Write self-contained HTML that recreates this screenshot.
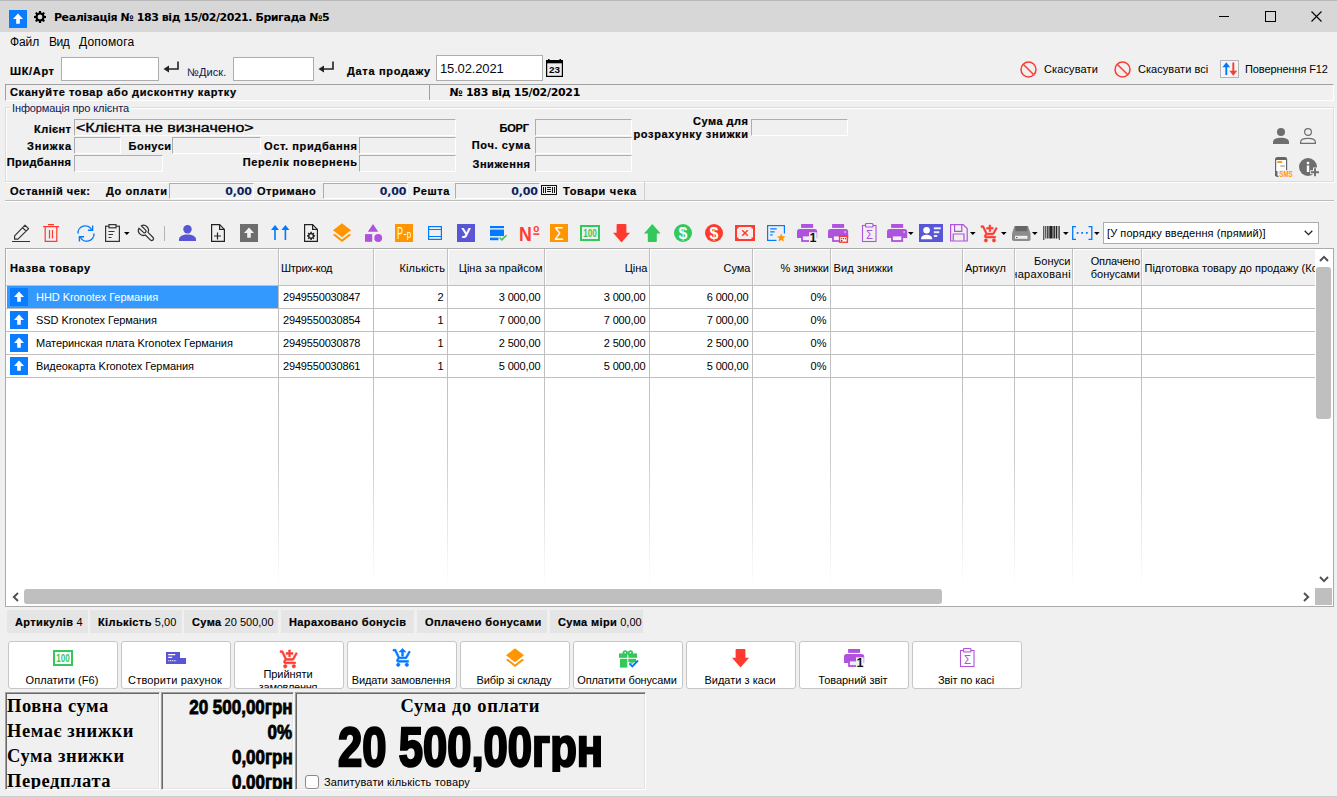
<!DOCTYPE html>
<html lang="uk"><head><meta charset="utf-8"><title>Реалізація</title>
<style>
*{box-sizing:border-box;margin:0;padding:0}
html,body{width:1337px;height:797px;overflow:hidden;background:#f0f0f0}
body{position:relative;font-family:"Liberation Sans",sans-serif;font-size:11px;color:#000}
.a{position:absolute;white-space:nowrap}
.t{position:absolute;white-space:nowrap;line-height:14px;height:14px}
.b{font-weight:bold}
.msb{font-weight:bold;font-size:11px;letter-spacing:.58px;-webkit-text-stroke:.2px #000}
.r{text-align:right}
.c{text-align:center}
.inp{position:absolute;background:#fff;border:1px solid #adadad}
.fld{position:absolute;background:#f0f0f0;border:1px solid;border-color:#adadad #fff #fff #adadad}
.sunk{position:absolute;border:1px solid;border-color:#a0a0a0 #fff #fff #a0a0a0}
.vl{position:absolute;width:1px;background:#c0c0c0}
.hl{position:absolute;height:1px;background:#c0c0c0}
.chip{position:absolute;top:610px;height:23px;background:#e5e5e5;line-height:24px;padding-left:8px;white-space:nowrap;font-size:11px}
.chip b{letter-spacing:.38px;-webkit-text-stroke:.2px #000}
.btn{position:absolute;top:641px;width:110px;height:48px;background:#fff;border:1px solid #c6c6c6;border-radius:3px;overflow:hidden}
.btn .lb{position:absolute;left:-2px;right:0;text-align:center;top:31px;line-height:14px;font-size:11px;white-space:nowrap}
.ic{position:absolute;overflow:visible}
.serif{font-family:"Liberation Serif",serif;font-weight:bold;font-size:18.500px;line-height:24px;height:24px}
.imp{font-family:"Liberation Sans",sans-serif;font-weight:bold;transform-origin:100% 50%;}
</style></head>
<body>
<div class="a" style="left:0;top:0;width:1337px;height:32px;background:#d7d7d7;border-top:1px solid #b9b9b9"></div>
<svg class="ic" style="left:9px;top:10px" width="18" height="18" viewBox="0 0 18 18"><rect width="18" height="18" fill="#0a7cff"/><path d="M9 3.6 L14 9 H10.8 V13.8 H7.2 V9 H4 Z" fill="#fff"/></svg>
<svg class="ic" style="left:34px;top:11px" width="12" height="12" viewBox="0 0 24 24"><path fill="#000" fill-rule="evenodd" d="M10 0h4l.6 3.4 1.9.8L19.3 2.2l2.5 2.5-2 2.8.8 1.9L24 10v4l-3.4.6-.8 1.9 2 2.8-2.5 2.5-2.8-2-1.9.8L14 24h-4l-.6-3.4-1.9-.8-2.8 2-2.5-2.5 2-2.8-.8-1.9L0 14v-4l3.4-.6.8-1.9-2-2.8 2.5-2.5 2.8 2 1.9-.8zM12 7.2a4.8 4.8 0 100 9.600 4.800 4.800 0 000-9.600z"/></svg>
<div class="t " style="left:54px;top:11px;font-family:'DejaVu Sans',sans-serif;font-weight:bold;font-size:11px;letter-spacing:-.44px">Реалізація № 183 від 15/02/2021. Бригада №5</div>
<svg class="ic" style="left:1210px;top:1px" width="127" height="30" viewBox="0 0 127 30"><g stroke="#000" stroke-width="1" fill="none" shape-rendering="crispEdges"><path d="M9 15.500 H19"/><rect x="55.500" y="10.500" width="10" height="10"/></g><path d="M101.500 10.500 L111.500 20.500 M111.500 10.500 L101.500 20.500" stroke="#000" stroke-width="1.100" fill="none"/></svg>
<div class="t " style="left:10px;top:35px;font-size:12px;letter-spacing:-.12px">Файл</div>
<div class="t " style="left:49px;top:35px;font-size:12px;letter-spacing:-.5px">Вид</div>
<div class="t " style="left:79px;top:35px;font-size:12px;letter-spacing:.2px">Допомога</div>
<div class="t msb" style="left:10px;top:64px;letter-spacing:0.654px;">ШК/Арт</div>
<div class="inp" style="left:61px;top:57px;width:98px;height:24px"></div>
<svg class="ic" style="left:163px;top:61px" width="17" height="13" viewBox="0 0 17 13"><path d="M15 0.500 V8 H5" stroke="#222" stroke-width="1.600" fill="none"/><path d="M0.500 8 L6 4.500 V11.500 Z" fill="#222"/></svg>
<div class="t " style="left:187px;top:65px;color:#0c1650;letter-spacing:.1px">№Диск.</div>
<div class="inp" style="left:233px;top:57px;width:81px;height:24px"></div>
<svg class="ic" style="left:318px;top:61px" width="17" height="13" viewBox="0 0 17 13"><path d="M15 0.500 V8 H5" stroke="#222" stroke-width="1.600" fill="none"/><path d="M0.500 8 L6 4.500 V11.500 Z" fill="#222"/></svg>
<div class="t msb" style="left:347px;top:64px;letter-spacing:0.685px;">Дата продажу</div>
<div class="inp" style="left:436px;top:55px;width:107px;height:26px"></div>
<div class="t " style="left:440px;top:62px;font-size:13px;letter-spacing:-.15px;color:#0a0a14;line-height:16px;height:16px;top:61px">15.02.2021</div>
<svg class="ic" style="left:546px;top:59px" width="17" height="18" viewBox="0 0 17 18"><rect x=".600" y="1.600" width="15.800" height="15.800" fill="#ececec" stroke="#000" stroke-width="1.200"/><rect x="0" y="1" width="17" height="3.300" fill="#000"/><rect x="2" y="0" width="1.500" height="2" fill="#000"/><rect x="13.500" y="0" width="1.500" height="2" fill="#000"/><text x="8.500" y="14.200" font-family="Liberation Sans,sans-serif" font-weight="bold" font-size="9.500" text-anchor="middle" fill="#000" textLength="11" lengthAdjust="spacingAndGlyphs">23</text></svg>
<svg class="ic" style="left:1020px;top:61px" width="17" height="17" viewBox="0 0 17 17"><circle cx="8.500" cy="8.500" r="7.500" fill="none" stroke="#ff3b30" stroke-width="1.500"/><path d="M3.200 3.200 L13.800 13.800" stroke="#ff3b30" stroke-width="1.500"/></svg>
<div class="t " style="left:1044px;top:62px;letter-spacing:.12px">Скасувати</div>
<svg class="ic" style="left:1114px;top:61px" width="17" height="17" viewBox="0 0 17 17"><circle cx="8.500" cy="8.500" r="7.500" fill="none" stroke="#ff3b30" stroke-width="1.500"/><path d="M3.200 3.200 L13.800 13.800" stroke="#ff3b30" stroke-width="1.500"/></svg>
<div class="t " style="left:1138px;top:62px;letter-spacing:.05px">Скасувати всі</div>
<svg class="ic" style="left:1220px;top:60px" width="19" height="18" viewBox="0 0 19 18"><rect x="0.500" y="0.500" width="18" height="17" fill="#f5f5f5" stroke="#b5b5b5"/><path d="M6.300 15 V6" stroke="#007aff" stroke-width="1.900"/><path d="M2.400 7.300 L6.300 2.300 L10.200 7.300 Z" fill="#007aff"/><path d="M13.300 2.500 V12" stroke="#ff3b30" stroke-width="1.900"/><path d="M9.400 10.700 L13.300 15.700 L17.200 10.700 Z" fill="#ff3b30"/></svg>
<div class="t " style="left:1245px;top:62px;letter-spacing:-.1px">Повернення F12</div>
<div class="sunk" style="left:5px;top:84px;width:1329px;height:17px"></div>
<div class="a" style="left:429px;top:85px;width:1px;height:15px;background:#a0a0a0"></div>
<div class="t msb" style="left:10px;top:85px;letter-spacing:0.594px;">Скануйте товар або дисконтну картку</div>
<div class="t " style="left:449.5px;top:86px;font-family:'DejaVu Sans',sans-serif;font-weight:bold;font-size:11px;letter-spacing:-.3px">№ 183 від 15/02/2021</div>
<div class="a" style="left:5px;top:107px;width:1329px;height:75px;border:1px solid #dcdcdc;box-shadow:inset 1px 1px 0 #fff, 1px 1px 0 #fff"></div>
<div class="t" style="left:10px;top:101px;background:#f0f0f0;padding:0 2px;color:#0c1650;letter-spacing:-.12px">Інформація про клієнта</div>
<div class="t msb" style="right:1265.593px;top:122px;letter-spacing:0.407px;">Клієнт</div>
<div class="fld" style="left:74px;top:119px;width:382px;height:17px"></div>
<div class="t" style="left:76px;top:120px;font-size:12.500px;line-height:16px;height:16px;transform-origin:0 50%;transform:scaleX(1.28);-webkit-text-stroke:.35px #000">&lt;Клієнта не визначено&gt;</div>
<div class="t msb" style="right:1265.124px;top:139px;letter-spacing:0.876px;">Знижка</div>
<div class="fld" style="left:74px;top:137px;width:47px;height:17px"></div>
<div class="t msb" style="right:1165.499px;top:139px;letter-spacing:0.501px;">Бонуси</div>
<div class="fld" style="left:172px;top:137px;width:89px;height:17px"></div>
<div class="t msb" style="right:979.379px;top:139px;letter-spacing:0.621px;">Ост. придбання</div>
<div class="fld" style="left:359px;top:137px;width:97px;height:17px"></div>
<div class="t msb" style="right:1265.599px;top:155px;letter-spacing:0.401px;">Придбання</div>
<div class="fld" style="left:74px;top:155px;width:89px;height:17px"></div>
<div class="t msb" style="right:979.384px;top:155px;letter-spacing:0.616px;">Перелік повернень</div>
<div class="fld" style="left:359px;top:155px;width:97px;height:17px"></div>
<div class="t msb" style="right:808.178px;top:121px;letter-spacing:-0.178px;">БОРГ</div>
<div class="fld" style="left:535px;top:119px;width:97px;height:17px"></div>
<div class="t msb" style="right:806.35px;top:138px;letter-spacing:0.65px;">Поч. сума</div>
<div class="fld" style="left:535px;top:137px;width:97px;height:17px"></div>
<div class="t msb" style="right:806.468px;top:157px;letter-spacing:0.532px;">Зниження</div>
<div class="fld" style="left:535px;top:155px;width:97px;height:17px"></div>
<div class="t msb" style="right:588.496px;top:114px;letter-spacing:0.504px;">Сума для</div>
<div class="t msb" style="right:588.358px;top:127px;letter-spacing:0.642px;">розрахунку знижки</div>
<div class="fld" style="left:751px;top:119px;width:97px;height:17px"></div>
<div class="t msb" style="left:10px;top:184px;letter-spacing:0.499px;">Останній чек:</div>
<div class="t msb" style="left:106px;top:184px;letter-spacing:0.579px;">До оплати</div>
<div class="fld" style="left:169px;top:183px;width:85px;height:16px"></div>
<div class="t " style="right:1085.147px;top:185px;letter-spacing:-0.147px;color:#0b1f5e;font-family:'DejaVu Sans',sans-serif;font-weight:bold;font-size:11px">0,00</div>
<div class="t msb" style="left:257px;top:184px;letter-spacing:0.55px;">Отримано</div>
<div class="fld" style="left:323px;top:183px;width:85px;height:16px"></div>
<div class="t " style="right:930.647px;top:185px;letter-spacing:-0.147px;color:#0b1f5e;font-family:'DejaVu Sans',sans-serif;font-weight:bold;font-size:11px">0,00</div>
<div class="t msb" style="left:413px;top:184px;letter-spacing:0.599px;">Решта</div>
<div class="fld" style="left:455px;top:183px;width:85px;height:16px"></div>
<div class="t " style="right:799.147px;top:185px;letter-spacing:-0.147px;color:#0b1f5e;font-family:'DejaVu Sans',sans-serif;font-weight:bold;font-size:11px">0,00</div>
<div class="t msb" style="left:563px;top:184px;letter-spacing:0.685px;">Товари чека</div>
<div class="a" style="left:644px;top:182px;width:1px;height:18px;background:#d0d0d0"></div>
<svg class="ic" style="left:12px;top:224px" width="18" height="18" viewBox="0 0 18 18"><path d="M2.600 15.200V11.800L13 1.200l3.600 3.400L6 15.200Z M10.600 3.700l3.600 3.400" stroke="#333" stroke-width="1.200" fill="none" stroke-linejoin="round"/><path d="M0 17.500H18" stroke="#333" stroke-width="1"/></svg>
<svg class="ic" style="left:43px;top:224px" width="16" height="18" viewBox="0 0 16 18"><g stroke="#ff3b30" stroke-width="1.200" fill="none"><path d="M5 .600h6M0 2.600h16M2.200 3V17.400H13.800V3M6.500 6v8.500M9.500 6v8.500"/></g></svg>
<svg class="ic" style="left:77px;top:225px" width="18" height="17" viewBox="0 0 18 17"><g stroke="#007aff" stroke-width="1.400" fill="none"><path d="M1 8.500A7.200 7.200 0 0 1 14.600 4.800"/><path d="M15.600 .500V5.200H10.900"/><path d="M17 8.500A7.200 7.200 0 0 1 3.400 12.200"/><path d="M2.400 16.500V11.800H7.100"/></g></svg>
<svg class="ic" style="left:105px;top:224px" width="15" height="18" viewBox="0 0 15 18"><g stroke="#333" stroke-width="1.200" fill="none"><rect x=".600" y="2.200" width="13.800" height="15.200"/><rect x="4" y=".600" width="7" height="3.200" fill="#f0f0f0"/><path d="M3.500 7.500h6M3.500 10.500h4.500M3.500 13.500h3"/></g></svg>
<svg class="ic" style="left:124px;top:232px" width="6" height="3" viewBox="0 0 6 3"><path d="M0 0H5.600L2.800 3Z" fill="#000"/></svg>
<svg class="ic" style="left:138px;top:225px" width="17" height="17" viewBox="0 0 17 17"><path d="M3.300 .8A5 5 0 0 1 10 7.400L15.100 12.500A1.850 1.850 0 0 1 12.500 15.100L7.400 10A5 5 0 0 1 .9 3.200L5.500 7.400A1.600 1.600 0 0 0 7.700 5.100Z" stroke="#333" stroke-width="1.250" fill="none" stroke-linejoin="round"/></svg>
<svg class="ic" style="left:178.5px;top:225px" width="17" height="16" viewBox="0 0 17 16"><circle cx="8.500" cy="4.200" r="4.200" fill="#5856d6"/><path d="M0 16V14.600C0 11.200 4 9.600 8.500 9.600S17 11.200 17 14.600V16Z" fill="#5856d6"/></svg>
<svg class="ic" style="left:211px;top:224px" width="14" height="18" viewBox="0 0 14 18"><g stroke="#222" stroke-width="1.200" fill="none"><path d="M.600 .600H8.600L13.400 5.400V17.400H.600Z"/><path d="M8.600 .600V5.400H13.400"/><path d="M6.500 8.500v7M3 12h7"/></g></svg>
<svg class="ic" style="left:240px;top:224px" width="18" height="18" viewBox="0 0 18 18"><rect width="18" height="18" fill="#6e6e6e"/><path d="M9 3.600 L14 9 H10.800 V13.800 H7.200 V9 H4 Z" fill="#f2f2f2"/></svg>
<svg class="ic" style="left:271px;top:225px" width="19" height="15" viewBox="0 0 19 15"><g fill="#007aff"><path d="M0 5L4 0L8 5Z"/><rect x="3.200" y="4" width="1.600" height="11"/><path d="M10.400 5L14.400 0L18.400 5Z"/><rect x="13.600" y="4" width="1.600" height="11"/></g></svg>
<svg class="ic" style="left:304px;top:224px" width="14" height="18" viewBox="0 0 14 18"><g stroke="#222" stroke-width="1.200" fill="none"><path d="M.600 .600H8.600L13.400 5.400V17.400H.600Z"/><path d="M8.600 .600V5.400H13.400"/></g><path transform="translate(3 7.800) scale(.34)" fill="#222" fill-rule="evenodd" d="M10 0h4l.6 3.400 1.900.8L19.300 2.200l2.500 2.500-2 2.800.8 1.900L24 10v4l-3.400.600-.8 1.900 2 2.800-2.500 2.500-2.800-2-1.900.8L14 24h-4l-.600-3.400-1.900-.8-2.800 2-2.500-2.500 2-2.800-.8-1.900L0 14v-4l3.400-.600.8-1.900-2-2.800 2.500-2.500 2.800 2 1.900-.8zM12 7.200a4.800 4.800 0 100 9.600 4.800 4.800 0 000-9.600z"/></svg>
<svg class="ic" style="left:333px;top:223px" width="18" height="19" viewBox="0 0 18 19"><path d="M9 .200L18 7.200L9 14.200L0 7.200Z" fill="#ff9500"/><path d="M1.700 10.700L9 16.400L16.300 10.700L18 12L9 19L0 12Z" fill="#ff9500"/></svg>
<svg class="ic" style="left:365px;top:224px" width="18" height="18" viewBox="0 0 18 18"><g fill="#af52de"><path d="M8 0L13.200 7.700H2.800Z"/><rect x="0" y="10.100" width="7.200" height="7.700"/><circle cx="13.200" cy="14" r="3.900"/></g></svg>
<svg class="ic" style="left:395px;top:224px" width="18" height="18" viewBox="0 0 18 18"><rect width="18" height="18" fill="#ff9500"/><text x="2" y="14.5" font-family="Liberation Sans,sans-serif" font-weight="normal" font-size="17" text-anchor="start" fill="#fff" textLength="6" lengthAdjust="spacingAndGlyphs">P</text><text x="8.2" y="13" font-family="Liberation Sans,sans-serif" font-weight="normal" font-size="11" text-anchor="start" fill="#fff" >-</text><text x="11.8" y="14" font-family="Liberation Sans,sans-serif" font-weight="normal" font-size="10" text-anchor="start" fill="#fff" textLength="4.500" lengthAdjust="spacingAndGlyphs">p</text></svg>
<svg class="ic" style="left:428px;top:226px" width="14" height="14" viewBox="0 0 14 14"><g stroke="#007aff" stroke-width="1.200" fill="none"><rect x=".600" y=".600" width="12.800" height="12.800"/><path d="M.600 3.500H13.400M.600 10.500H13.400"/></g></svg>
<svg class="ic" style="left:457px;top:224px" width="18" height="18" viewBox="0 0 18 18"><rect width="18" height="18" fill="#5856d6"/><text x="9" y="14.3" font-family="Liberation Sans,sans-serif" font-weight="bold" font-size="15" text-anchor="middle" fill="#fff" >У</text></svg>
<svg class="ic" style="left:490px;top:226px" width="17" height="15" viewBox="0 0 17 15"><g fill="#007aff"><rect x="0" y="0" width="14" height="2.200"/><rect x="0" y="3.600" width="14" height="6.500"/><rect x="0" y="11.600" width="8.500" height="2.600"/></g><path d="M9.700 11.600l2.200 2.200l4.500-4.600" stroke="#34c759" stroke-width="1.600" fill="none"/></svg>
<svg class="ic" style="left:518.8px;top:225px" width="21" height="16" viewBox="0 0 21 16"><text x="0" y="16" font-family="Liberation Sans,sans-serif" font-weight="bold" font-size="21" text-anchor="start" fill="#ff3b30" textLength="12.800" lengthAdjust="spacingAndGlyphs">N</text><text x="17.3" y="7.3" font-family="Liberation Sans,sans-serif" font-weight="bold" font-size="10" text-anchor="middle" fill="#ff3b30" >o</text><rect x="14.300" y="8.300" width="6" height="1.600" fill="#ff3b30"/></svg>
<svg class="ic" style="left:550px;top:224px" width="18" height="18" viewBox="0 0 18 18"><rect width="18" height="18" fill="#ff9500"/><text x="9" y="15.6" font-family="Liberation Sans,sans-serif" font-weight="normal" font-size="18.5" text-anchor="middle" fill="#fff" textLength="9.500" lengthAdjust="spacingAndGlyphs">Σ</text></svg>
<svg class="ic" style="left:580px;top:225px" width="20" height="16" viewBox="0 0 20 16"><rect x="1" y="1" width="18" height="14" fill="none" stroke="#34c759" stroke-width="2"/><text x="10" y="12" font-family="Liberation Sans,sans-serif" font-weight="bold" font-size="11" text-anchor="middle" fill="#34c759" textLength="13.500" lengthAdjust="spacingAndGlyphs">100</text></svg>
<svg class="ic" style="left:612.7px;top:224px" width="17" height="19" viewBox="0 0 17 19"><path d="M3.600 .9Q3.600 0 4.500 0H12.500Q13.400 0 13.400 .9V8.700H17L8.500 18.400L0 8.700H3.600Z" fill="#ff3b30"/></svg>
<svg class="ic" style="left:643.6px;top:224px" width="17" height="18" viewBox="0 0 17 18"><path d="M8.300 0L16.600 9.400H12.800V17Q12.800 17.900 11.900 17.900H4.700Q3.800 17.900 3.800 17V9.400H0Z" fill="#34c759"/></svg>
<svg class="ic" style="left:674px;top:224px" width="18" height="18" viewBox="0 0 18 18"><circle cx="9" cy="9" r="9" fill="#34c759"/><text x="9" y="14.6" font-family="Liberation Sans,sans-serif" font-weight="bold" font-size="16" text-anchor="middle" fill="#fff" >$</text></svg>
<svg class="ic" style="left:705px;top:224px" width="18" height="18" viewBox="0 0 18 18"><circle cx="9" cy="9" r="9" fill="#ff3b30"/><text x="9" y="14.6" font-family="Liberation Sans,sans-serif" font-weight="bold" font-size="16" text-anchor="middle" fill="#fff" >$</text></svg>
<svg class="ic" style="left:735px;top:225px" width="20" height="16" viewBox="0 0 20 16"><rect width="20" height="16" fill="#ff3b30"/><path d="M3.500 2H16.500V3.500H18V12.500H16.500V14H3.500V12.500H2V3.500H3.500Z" fill="#f6eeee"/><path d="M7.200 5.200l5.600 5.600M12.800 5.200l-5.600 5.600" stroke="#ff3b30" stroke-width="1.500"/></svg>
<svg class="ic" style="left:767px;top:225px" width="18" height="16" viewBox="0 0 18 16"><rect x=".600" y=".600" width="16.800" height="14.800" fill="none" stroke="#007aff" stroke-width="1.200"/><path d="M3.200 3.800h6.500M3.200 6.800h4.500M3.200 9.800h2.500" stroke="#007aff" stroke-width="1.200"/><rect x="9.500" y="8.500" width="9" height="8" fill="#f0f0f0"/><path d="M14.200 8.600l1.250 2.700 2.950.3-2.200 2 .65 2.900-2.650-1.500-2.650 1.500.65-2.900-2.200-2 2.950-.3z" fill="#ff9500"/></svg>
<svg class="ic" style="left:797px;top:224px" width="21" height="19" viewBox="0 0 21 19"><rect x="4.100" y="0" width="12" height="3.900" fill="#af52de"/><path d="M0 13.900V7.700Q0 5.100 2.600 5.100H17.600Q20.200 5.100 20.200 7.700V13.900Z" fill="#af52de"/><rect x="4.100" y="10.600" width="12" height="7.300" fill="#af52de"/><rect x="5.900" y="12.400" width="8.400" height="3.700" fill="#f0f0f0"/><rect x="12" y="8.300" width="7.700" height="10.500" fill="#f0f0f0"/><text x="16" y="17.9" font-family="Liberation Sans,sans-serif" font-weight="bold" font-size="12.5" text-anchor="middle" fill="#111" >1</text></svg>
<svg class="ic" style="left:828px;top:224px" width="21" height="19" viewBox="0 0 21 19"><rect x="4.100" y="0" width="12" height="3.900" fill="#af52de"/><path d="M0 13.900V7.700Q0 5.100 2.600 5.100H17.600Q20.200 5.100 20.200 7.700V13.900Z" fill="#af52de"/><rect x="4.100" y="10.600" width="12" height="7.300" fill="#af52de"/><rect x="5.900" y="12.400" width="8.400" height="3.700" fill="#f0f0f0"/><circle cx="17.100" cy="7.900" r="1" fill="#dcb4f2"/><rect x="11.600" y="11.900" width="7.800" height="6.300" fill="#fff" stroke="#ff3b30" stroke-width="1.400"/><rect x="10.900" y="11.200" width="9.200" height="1.900" fill="#ff3b30"/><path d="M13.200 14.800h1.100m.8 0h1.100m.8 0h1.100M13.200 16.600h1.100" stroke="#222" stroke-width="1.100"/></svg>
<svg class="ic" style="left:862px;top:223px" width="15" height="19" viewBox="0 0 15 19"><rect x=".500" y="2.500" width="13.500" height="16" fill="none" stroke="#af52de" stroke-width="1.100"/><rect x="3.500" y=".500" width="7.500" height="3.500" rx="1" fill="#f0f0f0" stroke="#af52de" stroke-width="1.200"/><text x="7.4" y="15.7" font-family="Liberation Sans,sans-serif" font-weight="normal" font-size="13.5" text-anchor="middle" fill="#af52de" textLength="7" lengthAdjust="spacingAndGlyphs">Σ</text></svg>
<svg class="ic" style="left:887px;top:224px" width="20" height="18" viewBox="0 0 20 18"><rect x="4.100" y="0" width="12" height="3.900" fill="#af52de"/><path d="M0 13.900V7.700Q0 5.100 2.600 5.100H17.600Q20.200 5.100 20.200 7.700V13.900Z" fill="#af52de"/><rect x="4.100" y="10.600" width="12" height="7.300" fill="#af52de"/><rect x="5.900" y="12.400" width="8.400" height="3.700" fill="#f0f0f0"/><circle cx="17.100" cy="7.900" r="1" fill="#dcb4f2"/></svg>
<svg class="ic" style="left:908px;top:232px" width="6" height="3" viewBox="0 0 6 3"><path d="M0 0H5.600L2.800 3Z" fill="#000"/></svg>
<svg class="ic" style="left:919px;top:224px" width="24" height="18" viewBox="0 0 24 18"><rect width="24" height="18" fill="#5856d6"/><circle cx="7.600" cy="6.300" r="3.300" fill="#fff"/><path d="M2 15.200C2 11.700 5 10.700 7.600 10.700S13.200 11.700 13.200 15.200Z" fill="#fff"/><g fill="#ebebfa"><rect x="14.800" y="3.300" width="7" height="2"/><rect x="14.800" y="7.200" width="5.500" height="2"/><rect x="14.800" y="11" width="3.500" height="2"/></g></svg>
<svg class="ic" style="left:950px;top:224px" width="18" height="18" viewBox="0 0 18 18"><g stroke="#af52de" stroke-width="1.200" fill="none"><path d="M.600 .600H13.200L17.200 4.600V17H.600Z"/><path d="M4.600 .600V7.400H11.800V.600"/><path d="M3.200 17V10H14V17"/></g></svg>
<svg class="ic" style="left:970px;top:232px" width="6" height="3" viewBox="0 0 6 3"><path d="M0 0H5.600L2.800 3Z" fill="#000"/></svg>
<svg class="ic" style="left:981.3px;top:225px" width="17" height="17" viewBox="0 0 17 17"><g transform="translate(-.8 -.8) scale(.81)" fill="#ff3b30" stroke="#ff3b30" stroke-width=".7"><path d="M11 9h2V6h3V4h-3V1h-2v3H8v2h3v3z"/><path d="M7 18c-1.100 0-1.990.9-1.990 2S5.900 22 7 22s2-.9 2-2-.9-2-2-2zm10 0c-1.100 0-1.990.9-1.990 2s.890 2 1.990 2 2-.9 2-2-.9-2-2-2zm-9.830-3.250l.030-.120.9-1.630h7.450c.750 0 1.410-.410 1.750-1.030l3.860-7.010L19.420 4h-.010l-1.100 2-2.760 5H8.530l-.130-.270L6.160 6l-.950-2-.940-2H1v2h2l3.600 7.590-1.350 2.450c-.160.280-.250.610-.250.960 0 1.100.9 2 2 2h12v-2H7.420c-.130 0-.250-.110-.250-.250z"/></g></svg>
<svg class="ic" style="left:1001px;top:232px" width="6" height="3" viewBox="0 0 6 3"><path d="M0 0H5.600L2.800 3Z" fill="#000"/></svg>
<svg class="ic" style="left:1011.8px;top:226px" width="19" height="15" viewBox="0 0 19 15"><path d="M2.500 0H16L18.500 7.500V13.200Q18.500 15 16.700 15H1.800Q0 15 0 13.200V7.500Z" fill="#8c8c8c"/><rect x="3.300" y="0" width="11.900" height="5.200" fill="#666"/><rect x="3" y="9.800" width="12.500" height="3" fill="#eee"/><rect x="4.200" y="11" width="1.200" height="1" fill="#444"/></svg>
<svg class="ic" style="left:1032px;top:232px" width="6" height="3" viewBox="0 0 6 3"><path d="M0 0H5.600L2.800 3Z" fill="#000"/></svg>
<svg class="ic" style="left:1043px;top:226px" width="17" height="14" viewBox="0 0 17 14"><g fill="#222"><rect x=".3" y="0" width="1" height="14"/><rect x="2.300" y="0" width="1" height="12.500"/><rect x="4.200" y="0" width="1.300" height="12.500"/><rect x="6.300" y="0" width="3.300" height="12.500"/><rect x="10.400" y="0" width="1.500" height="12.500"/><rect x="12.700" y="0" width="1.400" height="12.500"/><rect x="14.800" y="0" width=".7" height="12.500"/><rect x="15.900" y="0" width=".8" height="14"/></g></svg>
<svg class="ic" style="left:1063px;top:232px" width="6" height="3" viewBox="0 0 6 3"><path d="M0 0H5.600L2.800 3Z" fill="#000"/></svg>
<svg class="ic" style="left:1072px;top:226px" width="21" height="14" viewBox="0 0 21 14"><g stroke="#007aff" stroke-width="1.300" fill="none"><path d="M4 .600H.700V13.400H4M16.500 .600H19.800V13.400H16.500"/></g><g fill="#007aff"><rect x="4.700" y="6" width="1.800" height="1.800"/><rect x="9.300" y="6" width="1.800" height="1.800"/><rect x="13.900" y="6" width="1.800" height="1.800"/></g></svg>
<svg class="ic" style="left:1094px;top:232px" width="6" height="3" viewBox="0 0 6 3"><path d="M0 0H5.600L2.800 3Z" fill="#000"/></svg>
<div class="a" style="left:164px;top:226px;width:1px;height:15px;background:#b4b4b4"></div>
<div class="inp" style="left:1103px;top:222px;width:216px;height:22px;border-color:#adadad"></div>
<div class="t " style="left:1107px;top:226px;letter-spacing:.08px">[У порядку введення (прямий)]</div>
<svg class="ic" style="left:1304px;top:230px" width="9" height="6" viewBox="0 0 9 6"><path d="M.7 .8L4.500 4.600L8.300 .8" stroke="#222" stroke-width="1.300" fill="none"/></svg>
<svg class="ic" style="left:1273px;top:128px" width="16" height="16" viewBox="0 0 16 16"><circle cx="8" cy="4" r="4" fill="#6e6e6e"/><path d="M0 16V14.200C0 11 4 9.800 8 9.800S16 11 16 14.200V16Z" fill="#6e6e6e"/></svg>
<svg class="ic" style="left:1300px;top:128px" width="16" height="16" viewBox="0 0 16 16"><g stroke="#6e6e6e" stroke-width="1.200" fill="none"><circle cx="8" cy="4" r="3.400"/><path d="M.600 15.400V14.200C.600 11.500 4 10.400 8 10.400S15.400 11.500 15.400 14.200V15.400Z"/></g></svg>
<svg class="ic" style="left:1274.5px;top:157px" width="18" height="20" viewBox="0 0 18 20"><rect x=".600" y=".600" width="11" height="18.800" rx="1.800" fill="#fff" stroke="#666" stroke-width="1.200"/><path d="M.600 3V2.400Q.600 .600 2.400 .600H9.800Q11.600 .600 11.600 2.400V3Z" fill="#666"/><rect x="0" y="14" width="2.500" height="5" fill="#666"/><rect x="2.200" y="4.200" width="5" height="1.800" fill="#ff9500"/><rect x="5.400" y="8.300" width="4.600" height="1.600" fill="#b5b5b5"/><rect x="3.500" y="13.200" width="15" height="7" fill="#f0f0f0"/><text x="4.3" y="19.9" font-family="Liberation Sans,sans-serif" font-weight="bold" font-size="8.3" text-anchor="start" fill="#ff9500" textLength="13.300" lengthAdjust="spacingAndGlyphs">SMS</text></svg>
<svg class="ic" style="left:1299px;top:158px" width="21" height="19" viewBox="0 0 21 19"><circle cx="9" cy="9" r="9" fill="#6e6e6e"/><rect x="7.800" y="7.500" width="2.400" height="6.500" fill="#fff"/><rect x="7.800" y="3.800" width="2.400" height="2.400" fill="#fff"/><path d="M16 9.400v9.600M11.200 14.200h9.600" stroke="#f0f0f0" stroke-width="4"/><path d="M16 10.200v8M12 14.200h8" stroke="#6e6e6e" stroke-width="1.900"/></svg>
<svg class="ic" style="left:541px;top:185px" width="16" height="10" viewBox="0 0 16 10"><g shape-rendering="crispEdges"><rect x=".500" y=".500" width="15" height="9" fill="none" stroke="#111" stroke-width="1"/><path d="M2.500 2v6M4.500 2v6M11.500 2v6M13.500 2v6" stroke="#111" stroke-width="1"/><path d="M6 2.500h4M6 4.500h4M6 6.500h4" stroke="#111" stroke-width="1"/></g></svg>
<div class="a" style="left:5px;top:200px;width:1329px;height:2px;border-top:1px solid #bcbcbc;border-bottom:1px solid #fff"></div>
<div class="a" style="left:5px;top:248px;width:1329px;height:359px;background:#fff;border:1px solid #ababab"></div>
<div class="a" style="left:7px;top:250px;width:1308px;height:35px;background:#f0f0f0"></div>
<div class="vl" style="left:278px;top:249px;height:129px"></div>
<div class="vl" style="left:279px;top:250px;height:35px;background:#fff"></div>
<div class="vl" style="left:278px;top:378px;height:208px;background:linear-gradient(#c0c0c0,#cdcdcd 40%,#fff)"></div>
<div class="vl" style="left:373px;top:249px;height:129px"></div>
<div class="vl" style="left:374px;top:250px;height:35px;background:#fff"></div>
<div class="vl" style="left:373px;top:378px;height:208px;background:linear-gradient(#c0c0c0,#cdcdcd 40%,#fff)"></div>
<div class="vl" style="left:447px;top:249px;height:129px"></div>
<div class="vl" style="left:448px;top:250px;height:35px;background:#fff"></div>
<div class="vl" style="left:447px;top:378px;height:208px;background:linear-gradient(#c0c0c0,#cdcdcd 40%,#fff)"></div>
<div class="vl" style="left:544px;top:249px;height:129px"></div>
<div class="vl" style="left:545px;top:250px;height:35px;background:#fff"></div>
<div class="vl" style="left:544px;top:378px;height:208px;background:linear-gradient(#c0c0c0,#cdcdcd 40%,#fff)"></div>
<div class="vl" style="left:649px;top:249px;height:129px"></div>
<div class="vl" style="left:650px;top:250px;height:35px;background:#fff"></div>
<div class="vl" style="left:649px;top:378px;height:208px;background:linear-gradient(#c0c0c0,#cdcdcd 40%,#fff)"></div>
<div class="vl" style="left:752px;top:249px;height:129px"></div>
<div class="vl" style="left:753px;top:250px;height:35px;background:#fff"></div>
<div class="vl" style="left:752px;top:378px;height:208px;background:linear-gradient(#c0c0c0,#cdcdcd 40%,#fff)"></div>
<div class="vl" style="left:830px;top:249px;height:129px"></div>
<div class="vl" style="left:831px;top:250px;height:35px;background:#fff"></div>
<div class="vl" style="left:830px;top:378px;height:208px;background:linear-gradient(#c0c0c0,#cdcdcd 40%,#fff)"></div>
<div class="vl" style="left:962px;top:249px;height:129px"></div>
<div class="vl" style="left:963px;top:250px;height:35px;background:#fff"></div>
<div class="vl" style="left:962px;top:378px;height:208px;background:linear-gradient(#c0c0c0,#cdcdcd 40%,#fff)"></div>
<div class="vl" style="left:1014px;top:249px;height:129px"></div>
<div class="vl" style="left:1015px;top:250px;height:35px;background:#fff"></div>
<div class="vl" style="left:1014px;top:378px;height:208px;background:linear-gradient(#c0c0c0,#cdcdcd 40%,#fff)"></div>
<div class="vl" style="left:1072px;top:249px;height:129px"></div>
<div class="vl" style="left:1073px;top:250px;height:35px;background:#fff"></div>
<div class="vl" style="left:1072px;top:378px;height:208px;background:linear-gradient(#c0c0c0,#cdcdcd 40%,#fff)"></div>
<div class="vl" style="left:1141px;top:249px;height:129px"></div>
<div class="vl" style="left:1142px;top:250px;height:35px;background:#fff"></div>
<div class="vl" style="left:1141px;top:378px;height:208px;background:linear-gradient(#c0c0c0,#cdcdcd 40%,#fff)"></div>
<div class="hl" style="left:6px;top:285px;width:1309px"></div>
<div class="hl" style="left:6px;top:308px;width:1309px"></div>
<div class="hl" style="left:6px;top:331px;width:1309px"></div>
<div class="hl" style="left:6px;top:354px;width:1309px"></div>
<div class="hl" style="left:6px;top:377px;width:1309px"></div>
<div class="t msb" style="left:10px;top:261px;letter-spacing:0.651px;">Назва товару</div>
<div class="t " style="left:281px;top:261px;letter-spacing:-.28px">Штрих-код</div>
<div class="t " style="right:891.878px;top:261px;letter-spacing:0.122px;">Кількість</div>
<div class="t " style="right:794.496px;top:261px;letter-spacing:0.004px;">Ціна за прайсом</div>
<div class="t " style="right:689.5px;top:261px;">Ціна</div>
<div class="t " style="right:586.5px;top:261px;">Сума</div>
<div class="t " style="right:508px;top:261px;">% знижки</div>
<div class="t " style="left:833.5px;top:261px;letter-spacing:.1px">Вид знижки</div>
<div class="t " style="left:965px;top:261px;">Артикул</div>
<div class="a" style="left:1015px;top:249px;width:57px;height:36px;overflow:hidden"><div class="t" style="right:1.500px;top:5px">Бонуси</div><div class="t" style="right:1px;top:18px;letter-spacing:.35px">нараховані</div></div>
<div class="t " style="right:197.228px;top:254px;letter-spacing:-0.228px;">Оплачено</div>
<div class="t " style="right:196.992px;top:267px;letter-spacing:0.008px;">бонусами</div>
<div class="a" style="left:1142px;top:249px;width:173px;height:36px;overflow:hidden"><div class="t" style="left:2.500px;top:12px">Підготовка товару до продажу (Комплектація)</div></div>
<div class="a" style="left:7px;top:286px;width:271px;height:22px;background:#3399ff"></div>
<svg class="ic" style="left:10px;top:288px" width="18" height="18" viewBox="0 0 18 18"><rect width="18" height="18" fill="#0a7cff"/><path d="M9 3.600 L14 9 H10.800 V13.800 H7.200 V9 H4 Z" fill="#fff"/></svg>
<div class="t " style="left:36px;top:290px;color:#fff;letter-spacing:-.06px">HHD Kronotex Германия</div>
<div class="t " style="left:283px;top:290px;letter-spacing:-.17px">2949550030847</div>
<div class="t " style="right:893.5px;top:290px;">2</div>
<div class="t " style="right:796.5px;top:290px;letter-spacing:-.13px">3 000,00</div>
<div class="t " style="right:691.5px;top:290px;letter-spacing:-.13px">3 000,00</div>
<div class="t " style="right:588.5px;top:290px;letter-spacing:-.13px">6 000,00</div>
<div class="t " style="right:510.5px;top:290px;">0%</div>
<svg class="ic" style="left:10px;top:311px" width="18" height="18" viewBox="0 0 18 18"><rect width="18" height="18" fill="#0a7cff"/><path d="M9 3.600 L14 9 H10.800 V13.800 H7.200 V9 H4 Z" fill="#fff"/></svg>
<div class="t " style="left:36px;top:313px;letter-spacing:-.06px">SSD Kronotex Германия</div>
<div class="t " style="left:283px;top:313px;letter-spacing:-.17px">2949550030854</div>
<div class="t " style="right:893.5px;top:313px;">1</div>
<div class="t " style="right:796.5px;top:313px;letter-spacing:-.13px">7 000,00</div>
<div class="t " style="right:691.5px;top:313px;letter-spacing:-.13px">7 000,00</div>
<div class="t " style="right:588.5px;top:313px;letter-spacing:-.13px">7 000,00</div>
<div class="t " style="right:510.5px;top:313px;">0%</div>
<svg class="ic" style="left:10px;top:334px" width="18" height="18" viewBox="0 0 18 18"><rect width="18" height="18" fill="#0a7cff"/><path d="M9 3.600 L14 9 H10.800 V13.800 H7.200 V9 H4 Z" fill="#fff"/></svg>
<div class="t " style="left:36px;top:336px;letter-spacing:-.06px">Материнская плата Kronotex Германия</div>
<div class="t " style="left:283px;top:336px;letter-spacing:-.17px">2949550030878</div>
<div class="t " style="right:893.5px;top:336px;">1</div>
<div class="t " style="right:796.5px;top:336px;letter-spacing:-.13px">2 500,00</div>
<div class="t " style="right:691.5px;top:336px;letter-spacing:-.13px">2 500,00</div>
<div class="t " style="right:588.5px;top:336px;letter-spacing:-.13px">2 500,00</div>
<div class="t " style="right:510.5px;top:336px;">0%</div>
<svg class="ic" style="left:10px;top:357px" width="18" height="18" viewBox="0 0 18 18"><rect width="18" height="18" fill="#0a7cff"/><path d="M9 3.600 L14 9 H10.800 V13.800 H7.200 V9 H4 Z" fill="#fff"/></svg>
<div class="t " style="left:36px;top:359px;letter-spacing:-.06px">Видеокарта Kronotex Германия</div>
<div class="t " style="left:283px;top:359px;letter-spacing:-.17px">2949550030861</div>
<div class="t " style="right:893.5px;top:359px;">1</div>
<div class="t " style="right:796.5px;top:359px;letter-spacing:-.13px">5 000,00</div>
<div class="t " style="right:691.5px;top:359px;letter-spacing:-.13px">5 000,00</div>
<div class="t " style="right:588.5px;top:359px;letter-spacing:-.13px">5 000,00</div>
<div class="t " style="right:510.5px;top:359px;">0%</div>
<svg class="ic" style="left:1319px;top:255px" width="10" height="7" viewBox="0 0 10 7"><path d="M1 6 L5 1.800 L9 6" stroke="#505050" stroke-width="1.900" fill="none"/></svg>
<div class="a" style="left:1316px;top:267px;width:15px;height:152px;background:#bfbfbf;border-radius:3px"></div>
<svg class="ic" style="left:1319px;top:576px" width="10" height="7" viewBox="0 0 10 7"><path d="M1 1 L5 5.200 L9 1" stroke="#505050" stroke-width="1.900" fill="none"/></svg>
<div class="a" style="left:1315px;top:588px;width:17px;height:17px;background:#bfbfbf"></div>
<svg class="ic" style="left:12px;top:592px" width="7" height="10" viewBox="0 0 7 10"><path d="M6 1 L1.800 5 L6 9" stroke="#505050" stroke-width="1.900" fill="none"/></svg>
<svg class="ic" style="left:1303px;top:592px" width="7" height="10" viewBox="0 0 7 10"><path d="M1 1 L5.200 5 L1 9" stroke="#505050" stroke-width="1.900" fill="none"/></svg>
<div class="a" style="left:24px;top:589px;width:918px;height:15px;background:#bfbfbf;border-radius:3px"></div>
<div class="chip" style="left:7px;width:81px"><b>Артикулів</b> 4</div>
<div class="chip" style="left:90px;width:92px"><b>Кількість</b> 5,00</div>
<div class="chip" style="left:184px;width:94px"><b>Сума</b> 20 500,00</div>
<div class="chip" style="left:281px;width:133px"><b>Нараховано бонусів</b></div>
<div class="chip" style="left:417px;width:130px"><b>Оплачено бонусами</b></div>
<div class="chip" style="left:550px;width:93px"><b>Сума міри</b> 0,00</div>
<div class="btn" style="left:8px"><div class="lb" style="letter-spacing:0.03px;padding-left:0.03px">Оплатити (F6)</div></div>
<div class="btn" style="left:121px"><div class="lb" style="letter-spacing:0.146px;padding-left:0.146px">Створити рахунок</div></div>
<div class="btn" style="left:234px"><div class="lb" style="top:25px;letter-spacing:-0.04px;padding-left:-0.04px">Прийняти</div><div class="lb" style="top:38px;letter-spacing:-0.258px;padding-left:-0.258px">замовлення</div></div>
<div class="btn" style="left:347px"><div class="lb" style="letter-spacing:-0.146px;padding-left:-0.146px">Видати замовлення</div></div>
<div class="btn" style="left:460px"><div class="lb" style="letter-spacing:-0.131px;padding-left:-0.131px">Вибір зі складу</div></div>
<div class="btn" style="left:573px"><div class="lb" style="letter-spacing:-0.12px;padding-left:-0.12px">Оплатити бонусами</div></div>
<div class="btn" style="left:686px"><div class="lb" style="letter-spacing:0.022px;padding-left:0.022px">Видати з каси</div></div>
<div class="btn" style="left:799px"><div class="lb" style="letter-spacing:-0.035px;padding-left:-0.035px">Товарний звіт</div></div>
<div class="btn" style="left:912px"><div class="lb" style="letter-spacing:-0.107px;padding-left:-0.107px">Звіт по касі</div></div>
<div class="a" style="left:5px;top:692px;width:155px;height:98px;overflow:hidden;border:1px solid;border-color:#a0a0a0 #fff #fff #a0a0a0;box-shadow:inset 1px 1px 0 #696969,inset -1px -1px 0 #e3e3e3"><div class="a serif" style="left:1px;top:1px;letter-spacing:0.55px">Повна сума</div><div class="a serif" style="left:1px;top:26px;letter-spacing:0.55px">Немає знижки</div><div class="a serif" style="left:1px;top:51px;letter-spacing:0.55px">Сума знижки</div><div class="a serif" style="left:1px;top:76px;letter-spacing:0.55px">Передплата</div></div>
<div class="a" style="left:161px;top:692px;width:133px;height:98px;overflow:hidden;border:1px solid;border-color:#a0a0a0 #fff #fff #a0a0a0;box-shadow:inset 1px 1px 0 #696969,inset -1px -1px 0 #e3e3e3"><div class="a imp" style="right:0.5px;top:2px;font-size:19.5px;line-height:24px;transform:scaleX(0.872);-webkit-text-stroke:0.8px #000">20 500,00грн</div><div class="a imp" style="right:0.5px;top:27px;font-size:19.5px;line-height:24px;transform:scaleX(0.872);-webkit-text-stroke:0.8px #000">0%</div><div class="a imp" style="right:0.5px;top:52px;font-size:19.5px;line-height:24px;transform:scaleX(0.872);-webkit-text-stroke:0.8px #000">0,00грн</div><div class="a imp" style="right:0.5px;top:77px;font-size:19.5px;line-height:24px;transform:scaleX(0.872);-webkit-text-stroke:0.8px #000">0,00грн</div></div>
<div class="a" style="left:295px;top:692px;width:351px;height:98px;overflow:hidden;border:1px solid;border-color:#a0a0a0 #fff #fff #a0a0a0;box-shadow:inset 1px 1px 0 #696969,inset -1px -1px 0 #e3e3e3"><div class="a serif" style="left:104.5px;top:1px;letter-spacing:0.66px">Сума до оплати</div><div class="a" style="left:0;top:0;width:348px;height:79px;overflow:hidden"><div class="a imp" style="left:41.5px;top:24px;font-size:55px;line-height:60px;transform-origin:0 50%;transform:scaleX(0.793);-webkit-text-stroke:2.4px #000">20 500,00грн</div></div><div class="a" style="left:9px;top:82px;width:14px;height:14px;background:#fff;border:1px solid #8a8a8a;border-radius:3px"></div></div>
<div class="t " style="left:324px;top:775px;letter-spacing:.16px">Запитувати кількість товару</div>
<div class="a" style="left:0;top:796px;width:1337px;height:1px;background:#cfcfcf"></div>
<svg class="ic" style="left:53px;top:650px" width="20" height="16" viewBox="0 0 20 16"><rect x="1" y="1" width="18" height="14" fill="none" stroke="#34c759" stroke-width="2"/><text x="10" y="12" font-family="Liberation Sans,sans-serif" font-weight="bold" font-size="11" text-anchor="middle" fill="#34c759" textLength="13.500" lengthAdjust="spacingAndGlyphs">100</text></svg>
<svg class="ic" style="left:166px;top:652px" width="20" height="12" viewBox="0 0 20 12"><path d="M0 0H14V6H20V12H0Z" fill="#5856d6"/><path d="M2.200 2.700h7M2.200 5.300h4" stroke="#fff" stroke-width="1.200"/><path d="M2.200 8.700h8" stroke="#fff" stroke-width="1.100" stroke-dasharray="1.100 .7"/></svg>
<svg class="ic" style="left:280.3px;top:649.5px" width="18" height="19" viewBox="0 0 18 19"><g transform="translate(-.8 -.9) scale(.86)" fill="#ff3b30" stroke="#ff3b30" stroke-width=".7"><path d="M11 9h2V6h3V4h-3V1h-2v3H8v2h3v3z"/><path d="M7 18c-1.100 0-1.990.9-1.990 2S5.900 22 7 22s2-.9 2-2-.9-2-2-2zm10 0c-1.100 0-1.990.9-1.990 2s.890 2 1.990 2 2-.9 2-2-.9-2-2-2zm-9.830-3.250l.030-.120.9-1.630h7.450c.750 0 1.410-.410 1.750-1.030l3.860-7.010L19.420 4h-.010l-1.100 2-2.760 5H8.530l-.130-.270L6.160 6l-.950-2-.940-2H1v2h2l3.600 7.590-1.350 2.450c-.160.280-.250.610-.250.960 0 1.100.9 2 2 2h12v-2H7.420c-.130 0-.250-.110-.250-.250z"/></g></svg>
<svg class="ic" style="left:393px;top:648px" width="18" height="19" viewBox="0 0 18 19"><g transform="translate(-.8 -.4) scale(.86)" fill="#007aff" stroke="#007aff" stroke-width=".7"><path d="M12 1 L8 5 h3 v5 h2 v-5 h3 z"/><path d="M7 18c-1.100 0-1.990.9-1.990 2S5.900 22 7 22s2-.9 2-2-.9-2-2-2zm10 0c-1.100 0-1.990.9-1.990 2s.890 2 1.990 2 2-.9 2-2-.9-2-2-2zm-9.830-3.250l.030-.120.9-1.630h7.450c.750 0 1.410-.410 1.750-1.030l3.860-7.010L19.420 4h-.010l-1.100 2-2.760 5H8.530l-.130-.270L6.160 6l-.950-2-.940-2H1v2h2l3.600 7.590-1.350 2.450c-.160.280-.250.610-.250.960 0 1.100.9 2 2 2h12v-2H7.420c-.130 0-.250-.110-.250-.250z"/></g></svg>
<svg class="ic" style="left:505.5px;top:648px" width="18" height="19" viewBox="0 0 18 19"><path d="M9 .200L18 7.200L9 14.200L0 7.200Z" fill="#ff9500"/><path d="M1.700 10.700L9 16.400L16.300 10.700L18 12L9 19L0 12Z" fill="#ff9500"/></svg>
<svg class="ic" style="left:619px;top:649.5px" width="20" height="18" viewBox="0 0 20 18"><g fill="none" stroke="#34c759" stroke-width="1.800"><circle cx="6.200" cy="2.900" r="1.800"/><circle cx="11.400" cy="2.900" r="1.800"/></g><g fill="#34c759"><rect x="0" y="3.400" width="8.300" height="4.400"/><rect x="9.300" y="3.400" width="8.700" height="4.400"/><rect x="1" y="8.800" width="7.300" height="8.800"/><rect x="9.300" y="8.800" width="7.700" height="3.400"/><path d="M10.300 12.200H15.300L12.800 14Z"/></g><path d="M10.300 13.400l3 3l5.700-5.900" stroke="#007aff" stroke-width="1.900" fill="none"/></svg>
<svg class="ic" style="left:732.4px;top:648.6px" width="17" height="19" viewBox="0 0 17 19"><path d="M3.600 .9Q3.600 0 4.500 0H12.500Q13.400 0 13.400 .9V8.700H17L8.500 18.400L0 8.700H3.600Z" fill="#ff3b30"/></svg>
<svg class="ic" style="left:844px;top:649px" width="21" height="19" viewBox="0 0 21 19"><rect x="4.100" y="0" width="12" height="3.900" fill="#af52de"/><path d="M0 13.900V7.700Q0 5.100 2.600 5.100H17.600Q20.200 5.100 20.200 7.700V13.900Z" fill="#af52de"/><rect x="4.100" y="10.600" width="12" height="7.300" fill="#af52de"/><rect x="5.900" y="12.400" width="8.400" height="3.700" fill="#f0f0f0"/><rect x="12" y="8.300" width="7.700" height="10.500" fill="#f0f0f0"/><text x="16" y="17.9" font-family="Liberation Sans,sans-serif" font-weight="bold" font-size="12.5" text-anchor="middle" fill="#111" >1</text></svg>
<svg class="ic" style="left:959.7px;top:648px" width="15" height="19" viewBox="0 0 15 19"><rect x=".500" y="2.500" width="13.500" height="16" fill="none" stroke="#af52de" stroke-width="1.100"/><rect x="3.500" y=".500" width="7.500" height="3.500" rx="1" fill="#f0f0f0" stroke="#af52de" stroke-width="1.200"/><text x="7.4" y="15.7" font-family="Liberation Sans,sans-serif" font-weight="normal" font-size="13.5" text-anchor="middle" fill="#af52de" textLength="7" lengthAdjust="spacingAndGlyphs">Σ</text></svg>
</body></html>
